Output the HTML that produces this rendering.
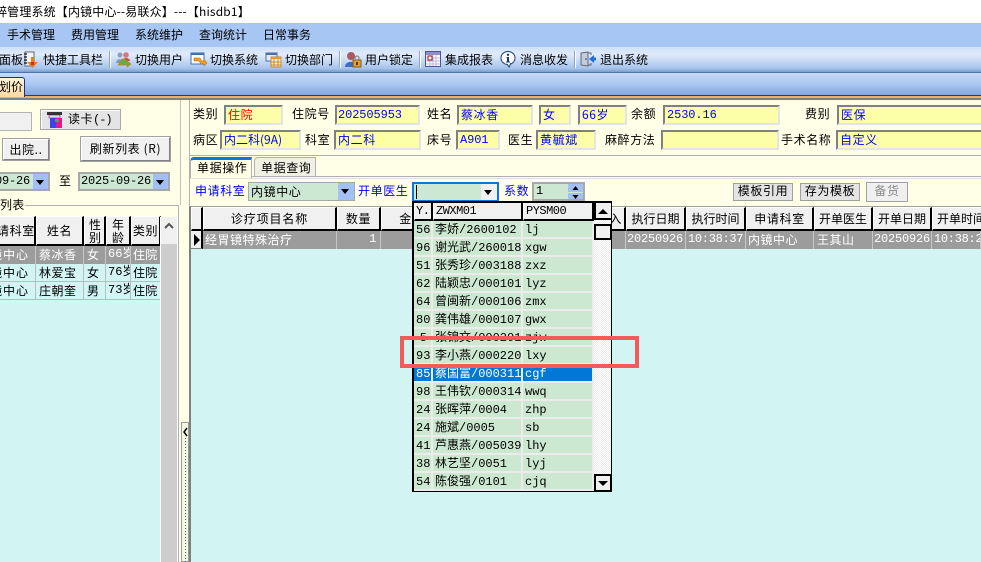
<!DOCTYPE html>
<html><head><meta charset="utf-8">
<style>
html,body{margin:0;padding:0;width:981px;height:562px;overflow:hidden;background:#fffee6}
body{position:relative;font:12px/16px "WenQuanYi Zen Hei","Noto Sans CJK SC",sans-serif;color:#000}
div,span.t{position:absolute;box-sizing:border-box;white-space:nowrap;overflow:hidden}
.l{letter-spacing:.6px}
.n{font-family:"Liberation Mono","WenQuanYi Zen Hei",monospace;letter-spacing:-.4px}
.i{background:#fcfea8;border:2px solid;border-color:#808080 #e4e4e4 #e4e4e4 #808080;color:#00f;height:20px;padding:0 2px;line-height:16px;letter-spacing:.6px}
.g{background:#cde8d2;border:2px solid #a8a8a8;height:20px;line-height:16px;padding:0 2px;letter-spacing:.6px}
.dd{background:#a3c0f5;width:15px;top:0;bottom:0;right:0}
.dd:after,.ar:after{content:"";position:absolute;left:3px;top:6px;border:4px solid transparent;border-top:5px solid #000;border-bottom:0}
.b{background:#f0f0f0;border:2px solid;border-color:#fff #808080 #808080 #fff;outline:1px solid #a0a0a0;outline-offset:-1px;text-align:center;letter-spacing:.6px}
.h{background:#f0f0f0;border-right:2px solid #000;border-bottom:2px solid #000;border-top:1px solid #fff;border-left:1px solid #fff;text-align:center;line-height:22px;letter-spacing:.6px}
.c{background:#9c9c9c;color:#fff;border-right:1px solid #c8c8c8;height:18px;line-height:17px;padding-left:2px;letter-spacing:.5px}
.r{background:#d2f4f3;border-right:1px solid #bcbcbc;border-bottom:1px solid #bcbcbc;height:18px;line-height:17px;padding-left:2px;letter-spacing:.5px}
.m{background:#cde8d0;border-right:2px solid #ececec;border-bottom:2px solid #ececec;height:18px;line-height:18px;padding-left:2px;letter-spacing:0}
.sel{background:#0078d7;color:#fff}
.s{height:17px;top:51px;background:#8ea5c8;border-right:1px solid #fff;width:2px}
</style></head><body>
<div style="left:0;top:0;width:981px;height:23px;background:#fff;padding-top:4px"><span style="position:relative;left:-5px;letter-spacing:.16px">粹管理系统【内镜中心--易联众】---【hisdb1】</span></div>
<div style="left:0;top:23px;width:981px;height:24px;background:#a8c6f4"></div>
<div style="left:7px;top:27px">手术管理</div><div style="left:71px;top:27px">费用管理</div><div style="left:135px;top:27px">系统维护</div><div style="left:199px;top:27px">查询统计</div><div style="left:263px;top:27px">日常事务</div>
<div style="left:0;top:47px;width:981px;height:26px;background:linear-gradient(#cfe0f8,#e0ebfb 30%,#a8c4ec 85%,#7c9ccc);border-bottom:1px solid #4f74ac"></div>
<div style="left:0;top:73px;width:981px;height:23px;background:linear-gradient(#c8dbf8,#a8c6f2 50%,#7fa3dc)"></div>
<div style="left:0;top:95px;width:981px;height:1px;background:#243e6e"></div>
<div style="left:0;top:96px;width:981px;height:2px;background:#f0b060"></div>
<div style="left:0;top:98px;width:981px;height:2px;background:#808080"></div>

<!-- toolbar -->
<div style="left:-1px;top:52px">面板</div><div style="left:43px;top:52px">快捷工具栏</div><div style="left:135px;top:52px">切换用户</div><div style="left:210px;top:52px">切换系统</div><div style="left:285px;top:52px">切换部门</div><div style="left:365px;top:52px">用户锁定</div><div style="left:445px;top:52px">集成报表</div><div style="left:520px;top:52px">消息收发</div><div style="left:600px;top:52px">退出系统</div>
<div class="s" style="left:109px"></div><div class="s" style="left:339px"></div><div class="s" style="left:419px"></div><div class="s" style="left:574px"></div>
<svg style="position:absolute;left:22px;top:51px" width="18" height="18"><rect x="3" y="1" width="9" height="14" fill="#f4f4f4" stroke="#667"/><path d="M2 3h3M2 6h3M2 9h3M2 12h3" stroke="#111" stroke-width="1.200"/><path d="M9 6h3v5h4l-5.500 6L5 11h4z" fill="#ee7a18"/><path d="M9 11h3v3h-3z" fill="#c03810"/></svg>
<svg style="position:absolute;left:115px;top:51px" width="18" height="17"><circle cx="5" cy="4" r="2.500" fill="#8a9cc0"/><circle cx="11" cy="4" r="2.800" fill="#d87878"/><path d="M1 12c0-5 7-5 7 0z" fill="#7a9bd0"/><path d="M7 10c0-4 8-4 8 0z" fill="#c85050"/><path d="M3 14l4-6h2l3 2v-0l4 3-4 3v-2h-9z" fill="#62b040" stroke="#c8801c" stroke-width=".7"/></svg>
<svg style="position:absolute;left:190px;top:52px" width="17" height="16"><rect x="1" y="1" width="13" height="11" fill="#fff" stroke="#3c70b8"/><rect x="1" y="1" width="13" height="2" fill="#3c70b8"/><path d="M4 6h6l2 3h2v-2l3 4-3 3v-2h-3l-2-3h-5z" fill="#f0a020" stroke="#a86010" stroke-width=".5"/></svg>
<svg style="position:absolute;left:265px;top:52px" width="17" height="16"><rect x="1" y="1" width="11" height="8" fill="#e4ecf8" stroke="#4a6ea8"/><rect x="1" y="1" width="11" height="2" fill="#4a6ea8"/><rect x="6" y="5" width="10" height="10" fill="#f8f0d8" stroke="#c88a30"/><rect x="6" y="5" width="10" height="2" fill="#e89a30"/><path d="M6 10h10M6 13h10M9 7v8M13 7v8" stroke="#c88a30"/></svg>
<svg style="position:absolute;left:345px;top:51px" width="18" height="17"><circle cx="6" cy="5" r="4" fill="#a85a60"/><path d="M0 16c0-7 12-7 12 0z" fill="#3f6ec0"/><rect x="8" y="9" width="8" height="7" fill="#e0a030" stroke="#8a5a10"/><path d="M10 9v-2a2 2 0 0 1 4 0v2" fill="none" stroke="#777"/><rect x="11" y="11" width="2" height="3" fill="#5a3a08"/></svg>
<svg style="position:absolute;left:425px;top:51px" width="16" height="16"><rect x=".5" y=".5" width="15" height="15" fill="#fff" stroke="#5050a0"/><rect x="1" y="1" width="14" height="3" fill="#9090c8"/><path d="M1 7h14M1 10h14M1 13h14M5 4v11M8 4v11M11 4v11" stroke="#b8b8e0"/><rect x="3" y="5" width="4" height="4" fill="#fff" stroke="#a01010"/></svg>
<svg style="position:absolute;left:500px;top:51px" width="16" height="17"><ellipse cx="8" cy="7" rx="7" ry="6.500" fill="#fff" stroke="#1c3c78"/><path d="M7 13l2 3 2-4" fill="#fff" stroke="#1c3c78"/><circle cx="8" cy="3.800" r="1.200" fill="#183a78"/><path d="M6.500 6h2.500v4.500h1v1h-4v-1h1v-3.500h-.5z" fill="#183a78"/></svg>
<svg style="position:absolute;left:580px;top:51px" width="17" height="17"><path d="M1 2l7-1v14l-7-1z" fill="#c0cce0" stroke="#667"/><path d="M8 2h3v2M8 14h3v-2" fill="none" stroke="#667"/><circle cx="6" cy="8" r=".8" fill="#334"/><path d="M9 8l5-4v2.500h2v3h-2v2.500z" fill="#2070d8"/></svg>

<!-- tab -->
<div style="left:-8px;top:77px;width:33px;height:20px;background:linear-gradient(#fff4dc,#ffd9a0);border:1px solid #1c2f8a;border-bottom:0;border-radius:0 3px 0 0;padding:1px 0 0 6px;line-height:16px">划价</div>

<!-- left -->
<div style="left:0;top:112px;width:32px;height:19px;background:#f0f0f0;border:1px solid #b4b4b4;border-left:0"></div>
<div style="left:40px;top:109px;width:81px;height:21px;background:#e4e4e4;border:1px solid #a8a8a8;box-shadow:inset 1px 1px 0 #fff"></div>
<svg style="position:absolute;left:46px;top:111px" width="18" height="18"><rect x="1" y="1" width="15" height="3" fill="#333"/><rect x="3" y="4" width="11" height="3" fill="#ddd" stroke="#333" stroke-width=".5"/><rect x="4" y="7" width="6" height="10" fill="#4040f0"/><rect x="10" y="7" width="6" height="10" fill="#e01890"/><rect x="9" y="8" width="4" height="3" fill="#50a050"/></svg>
<div style="left:68px;top:111px;letter-spacing:.5px">读卡<span style="letter-spacing:-1px;font-family:'Liberation Mono',monospace">(-)</span></div>
<div class="b" style="left:2px;top:138px;width:48px;height:23px;line-height:19px">出院..</div>
<div class="b" style="left:80px;top:136px;width:91px;height:26px;line-height:21px">刷新列表 (R)</div>
<div class="g n" style="left:-4px;top:172px;width:54px;height:19px;line-height:15px"><span style="position:absolute;left:-3px;letter-spacing:-.2px">09-26</span><div class="dd"></div></div>
<div style="left:59px;top:173px">至</div>
<div class="g n" style="left:78px;top:172px;width:92px;height:19px;line-height:15px;letter-spacing:-.2px;padding-left:1px">2025-09-26<div class="dd"></div></div>

<div style="left:-2px;top:205px;width:181px;height:357px;border:1px solid #b0b0b0"></div>
<div style="left:0;top:198px;width:25px;height:15px;background:#fffee6;letter-spacing:.3px;line-height:14px">列表</div>
<div style="left:0;top:216px;width:161px;height:346px;background:#d2f4f3"></div>
<div class="h" style="left:-10px;top:216px;width:46px;height:30px;line-height:27px;text-align:left;padding-left:6px">请科室</div>
<div class="h" style="left:36px;top:216px;width:48px;height:30px;line-height:27px">姓名</div>
<div class="h" style="left:84px;top:216px;width:22px;height:30px;line-height:13px;white-space:normal;padding:1px 4px 0">性别</div>
<div class="h" style="left:106px;top:216px;width:25px;height:30px;line-height:13px;white-space:normal;padding:1px 5px 0">年龄</div>
<div class="h" style="left:131px;top:216px;width:30px;height:30px;line-height:27px">类别</div>
<div class="c" style="left:-16px;top:246px;width:52px;padding-left:6px;letter-spacing:1px">镜中心</div><div class="c" style="left:36px;top:246px;width:48px;padding-left:3px">蔡冰香</div><div class="c" style="left:84px;top:246px;width:22px;padding-left:3px">女</div><div class="c n" style="left:106px;top:246px;width:25px;padding-left:2px;letter-spacing:0">66岁</div><div class="c" style="left:131px;top:246px;width:30px;padding-left:2px;letter-spacing:.2px">住院</div>
<div class="r" style="left:-16px;top:264px;width:52px;padding-left:6px;letter-spacing:1px">镜中心</div><div class="r" style="left:36px;top:264px;width:48px;padding-left:3px">林爱宝</div><div class="r" style="left:84px;top:264px;width:22px;padding-left:3px">女</div><div class="r n" style="left:106px;top:264px;width:25px;letter-spacing:0">76岁</div><div class="r" style="left:131px;top:264px;width:30px;letter-spacing:.2px">住院</div>
<div class="r" style="left:-16px;top:282px;width:52px;padding-left:6px;letter-spacing:1px">镜中心</div><div class="r" style="left:36px;top:282px;width:48px;padding-left:3px">庄朝奎</div><div class="r" style="left:84px;top:282px;width:22px;padding-left:3px">男</div><div class="r n" style="left:106px;top:282px;width:25px;letter-spacing:0">73岁</div><div class="r" style="left:131px;top:282px;width:30px;letter-spacing:.2px">住院</div>
<div style="left:160px;top:217px;width:18px;height:345px;background:#cdcdcd;border-right:1px solid #fff;border-left:1px solid #fff"></div>
<div style="left:161px;top:217px;width:16px;height:27px;background:#f0f0f0"></div>
<svg style="position:absolute;left:164px;top:222px" width="10" height="8"><path d="M1 6l4-4 4 4" fill="none" stroke="#555" stroke-width="2"/></svg>

<!-- splitter -->
<div style="left:180px;top:100px;width:1px;height:105px;background:#c0c0c0"></div>
<div style="left:189px;top:100px;width:1px;height:106px;background:#b0b0b0"></div>
<div style="left:181px;top:422px;width:8px;height:140px;border:1px solid #9a9a9a;background:#f4f8e0"></div>
<svg style="position:absolute;left:183px;top:427px" width="5" height="10"><path d="M4 1l-3 4 3 4" fill="none" stroke="#000" stroke-width="1.500"/></svg>
<div style="left:185px;top:438px;width:1px;height:124px;background:repeating-linear-gradient(#2a70c0 0 1px,transparent 1px 3px)"></div>

<!-- patient box -->
<div style="left:189px;top:100px;width:800px;height:56px;border:1px solid #b0b0b0;border-top:0"></div>
<div class="l" style="left:193px;top:106px">类别</div><div class="i" style="left:224px;top:105px;width:59px;color:#f00">住院</div>
<div class="l" style="left:292px;top:106px">住院号</div><div class="i n" style="left:335px;top:105px;width:85px;letter-spacing:-.1px;padding-left:1px">202505953</div>
<div class="l" style="left:427px;top:106px">姓名</div><div class="i" style="left:457px;top:105px;width:76px">蔡冰香</div>
<div class="i" style="left:539px;top:105px;width:32px">女</div><div class="i" style="left:578px;top:105px;width:49px">66岁</div>
<div class="l" style="left:631px;top:106px">余额</div><div class="i n" style="left:663px;top:105px;width:117px;letter-spacing:-.1px">2530.16</div>
<div class="l" style="left:805px;top:106px">费别</div><div class="i" style="left:837px;top:105px;width:150px">医保</div>
<div class="l" style="left:193px;top:132px">病区</div><div class="i" style="left:220px;top:130px;width:81px;letter-spacing:0">内二科(9A)</div>
<div class="l" style="left:305px;top:132px">科室</div><div class="i" style="left:334px;top:130px;width:87px">内二科</div>
<div class="l" style="left:427px;top:132px">床号</div><div class="i n" style="left:456px;top:130px;width:44px;letter-spacing:-.1px">A901</div>
<div class="l" style="left:508px;top:132px">医生</div><div class="i" style="left:536px;top:130px;width:60px">黄毓斌</div>
<div class="l" style="left:605px;top:132px">麻醉方法</div><div class="i" style="left:661px;top:130px;width:118px"></div>
<div class="l" style="left:781px;top:132px">手术名称</div><div class="i" style="left:836px;top:130px;width:150px">自定义</div>

<!-- tabs -->
<div style="left:190px;top:176px;width:800px;height:1px;background:#b0b0b0"></div>
<div style="left:190px;top:157px;width:62px;height:21px;background:#fffee6;border:1px solid #b0b0b0;border-top:3px solid #0a78d8;border-bottom:0;border-radius:4px 0 0 0;padding-left:6px;line-height:16px;letter-spacing:.6px">单据操作</div>
<div style="left:254px;top:157px;width:62px;height:20px;background:#f0f0e4;border:1px solid #b0b0b0;border-radius:4px 0 0 0;padding:2px 0 0 6px;line-height:16px;letter-spacing:.6px">单据查询</div>
<div style="left:190px;top:178px;width:800px;height:1px;background:#e0e0e0"></div>
<div class="l" style="left:195px;top:183px;color:#00f">申请科室</div>
<div class="g" style="left:248px;top:182px;width:107px;padding-left:2px;height:19px;line-height:15px;border-width:1px;padding-top:1px">内镜中心<div class="dd" style="width:16px"></div></div>
<div class="l" style="left:358px;top:183px;color:#00f">开单医生</div>
<div style="left:412px;top:182px;width:87px;height:20px;background:#cde8d2;border:2px solid #0a78d8"><div style="left:2px;top:1px;width:1px;height:14px;background:#000"></div><div class="ar" style="right:0;top:0;width:16px;height:16px;background:#f0f0f0"></div></div>
<div class="l" style="left:504px;top:183px;color:#00f">系数</div>
<div class="g n" style="left:532px;top:182px;width:53px;height:19px;line-height:15px;padding-left:2px;letter-spacing:0">1<div style="right:0;top:0;width:15px;height:8px;background:#a3c0f5"></div><div style="right:0;top:9px;width:15px;height:8px;background:#a3c0f5"></div>
<svg style="position:absolute;right:3px;top:1px" width="9" height="15"><path d="M4.500 1l3 4h-6zM1.500 10h6l-3 4z" fill="#000"/></svg></div>
<div class="b" style="left:733px;top:183px;width:60px;height:18px;line-height:14px;background:#e4e4e4;border-width:1px">模板引用</div>
<div class="b" style="left:800px;top:183px;width:60px;height:18px;line-height:14px;background:#e4e4e4;border-width:1px">存为模板</div>
<div class="b" style="left:866px;top:182px;width:42px;height:20px;line-height:16px;color:#8a8a8a;border-width:1px;border-color:#d0d0d0">备货</div>

<!-- main grid -->
<div style="left:189px;top:206px;width:801px;height:356px;background:#d2f4f3;border-top:1px solid #a0a0a0;border-left:2px solid #808080"></div>
<div class="h" style="left:191px;top:207px;width:12px;height:24px"></div>
<div class="h" style="left:203px;top:207px;width:134px;height:24px;letter-spacing:.9px">诊疗项目名称</div>
<div class="h" style="left:337px;top:207px;width:44px;height:24px">数量</div>
<div class="h" style="left:381px;top:207px;width:50px;height:24px">金</div>
<div class="h" style="left:560px;top:207px;width:66px;height:24px;text-align:right;padding-right:2px">入</div>
<div class="h" style="left:626px;top:207px;width:60px;height:24px;letter-spacing:0">执行日期</div>
<div class="h" style="left:686px;top:207px;width:60px;height:24px;letter-spacing:0">执行时间</div>
<div class="h" style="left:746px;top:207px;width:68px;height:24px">申请科室</div>
<div class="h" style="left:814px;top:207px;width:59px;height:24px;letter-spacing:0">开单医生</div>
<div class="h" style="left:873px;top:207px;width:59px;height:24px;letter-spacing:0">开单日期</div>
<div class="h" style="left:932px;top:207px;width:59px;height:24px;letter-spacing:0;text-align:left;padding-left:4px">开单时间</div>
<div style="left:191px;top:231px;width:12px;height:18px;background:#f0f0f0;border-right:2px solid #000;border-bottom:1px solid #808080"></div>
<svg style="position:absolute;left:193px;top:234px" width="8" height="12"><path d="M1 0l6 6-6 6z" fill="#000"/></svg>
<div class="c" style="left:203px;top:231px;width:134px;letter-spacing:.5px">经胃镜特殊治疗</div>
<div class="c n" style="left:337px;top:231px;width:44px;text-align:right;padding-right:3px">1</div>
<div class="c" style="left:381px;top:231px;width:245px"></div>
<div class="c n" style="left:626px;top:231px;width:60px;letter-spacing:-.2px;padding-left:1px">20250926</div>
<div class="c n" style="left:686px;top:231px;width:60px;letter-spacing:-.3px">10:38:37</div>
<div class="c" style="left:746px;top:231px;width:68px">内镜中心</div>
<div class="c" style="left:814px;top:231px;width:59px;padding-left:3px">王其山</div>
<div class="c n" style="left:873px;top:231px;width:59px;letter-spacing:-.2px;padding-left:1px">20250926</div>
<div class="c n" style="left:932px;top:231px;width:49px;letter-spacing:-.3px">10:38:2</div>

<!-- dropdown -->
<div style="left:412px;top:201px;width:200px;height:291px;background:#fff;border:2px solid #000;border-bottom-width:1px;border-right-width:1px"></div>
<div class="h n" style="left:414px;top:203px;width:19px;height:18px;line-height:17px;text-align:left;padding-left:1px;letter-spacing:-.5px;border-top:0">Y.</div>
<div class="h n" style="left:433px;top:203px;width:90px;height:18px;line-height:17px;text-align:left;padding-left:2px;letter-spacing:-.5px;border-top:0">ZWXM01</div>
<div class="h n" style="left:523px;top:203px;width:71px;height:18px;line-height:17px;text-align:left;padding-left:2px;letter-spacing:-.5px;border-top:0">PYSM00</div>
<div style="left:594px;top:203px;width:17px;height:288px;background:repeating-conic-gradient(#fff 0 25%,#ebebeb 0 50%) 0 0/2px 2px"></div>
<div class="m n" style="left:414px;top:221px;width:19px">56</div><div class="m n" style="left:433px;top:221px;width:90px">李娇/2600102</div><div class="m n" style="left:523px;top:221px;width:71px">lj</div>
<div class="m n" style="left:414px;top:239px;width:19px">96</div><div class="m n" style="left:433px;top:239px;width:90px">谢光武/260018</div><div class="m n" style="left:523px;top:239px;width:71px">xgw</div>
<div class="m n" style="left:414px;top:257px;width:19px">51</div><div class="m n" style="left:433px;top:257px;width:90px">张秀珍/003188</div><div class="m n" style="left:523px;top:257px;width:71px">zxz</div>
<div class="m n" style="left:414px;top:275px;width:19px">62</div><div class="m n" style="left:433px;top:275px;width:90px">陆颖忠/000101</div><div class="m n" style="left:523px;top:275px;width:71px">lyz</div>
<div class="m n" style="left:414px;top:293px;width:19px">64</div><div class="m n" style="left:433px;top:293px;width:90px">曾闽新/000106</div><div class="m n" style="left:523px;top:293px;width:71px">zmx</div>
<div class="m n" style="left:414px;top:311px;width:19px">80</div><div class="m n" style="left:433px;top:311px;width:90px">龚伟雄/000107</div><div class="m n" style="left:523px;top:311px;width:71px">gwx</div>
<div class="m n" style="left:414px;top:329px;width:19px;text-align:right;padding-right:4px">5</div><div class="m n" style="left:433px;top:329px;width:90px">张锦文/000201</div><div class="m n" style="left:523px;top:329px;width:71px">zjw</div>
<div class="m n" style="left:414px;top:347px;width:19px">93</div><div class="m n" style="left:433px;top:347px;width:90px">李小燕/000220</div><div class="m n" style="left:523px;top:347px;width:71px">lxy</div>
<div class="m n sel" style="left:414px;top:365px;width:19px">85</div><div class="m n sel" style="left:433px;top:365px;width:90px">蔡国富/000311</div><div class="m n sel" style="left:523px;top:365px;width:71px">cgf</div>
<div class="m n" style="left:414px;top:383px;width:19px">98</div><div class="m n" style="left:433px;top:383px;width:90px">王伟钦/000314</div><div class="m n" style="left:523px;top:383px;width:71px">wwq</div>
<div class="m n" style="left:414px;top:401px;width:19px">24</div><div class="m n" style="left:433px;top:401px;width:90px">张晖萍/0004</div><div class="m n" style="left:523px;top:401px;width:71px">zhp</div>
<div class="m n" style="left:414px;top:419px;width:19px">24</div><div class="m n" style="left:433px;top:419px;width:90px">施斌/0005</div><div class="m n" style="left:523px;top:419px;width:71px">sb</div>
<div class="m n" style="left:414px;top:437px;width:19px">41</div><div class="m n" style="left:433px;top:437px;width:90px">芦惠燕/005039</div><div class="m n" style="left:523px;top:437px;width:71px">lhy</div>
<div class="m n" style="left:414px;top:455px;width:19px">38</div><div class="m n" style="left:433px;top:455px;width:90px">林艺坚/0051</div><div class="m n" style="left:523px;top:455px;width:71px">lyj</div>
<div class="m n" style="left:414px;top:473px;width:19px;height:18px">54</div><div class="m n" style="left:433px;top:473px;width:90px;height:18px">陈俊强/0101</div><div class="m n" style="left:523px;top:473px;width:71px;height:18px">cjq</div>
<div style="left:594px;top:203px;width:17px;height:17px;background:#f0f0f0;border:1px solid #000;border-width:0 0 2px 2px"></div>
<svg style="position:absolute;left:597px;top:208px" width="12" height="7"><path d="M6 1l5 5H1z" fill="#000"/></svg>
<div style="left:594px;top:224px;width:17px;height:16px;background:#f0f0f0;border:2px solid #000;border-right:1px solid #000"></div>
<div style="left:594px;top:474px;width:17px;height:17px;background:#f0f0f0;border:2px solid #000;border-right:1px solid #000;border-bottom:1px solid #000"></div>
<svg style="position:absolute;left:597px;top:480px" width="12" height="7"><path d="M1 1h10l-5 5z" fill="#000"/></svg>

<!-- red box -->
<div style="left:400px;top:336px;width:239px;height:32px;border:4px solid #f45a5a;background:transparent"></div>
</body></html>
